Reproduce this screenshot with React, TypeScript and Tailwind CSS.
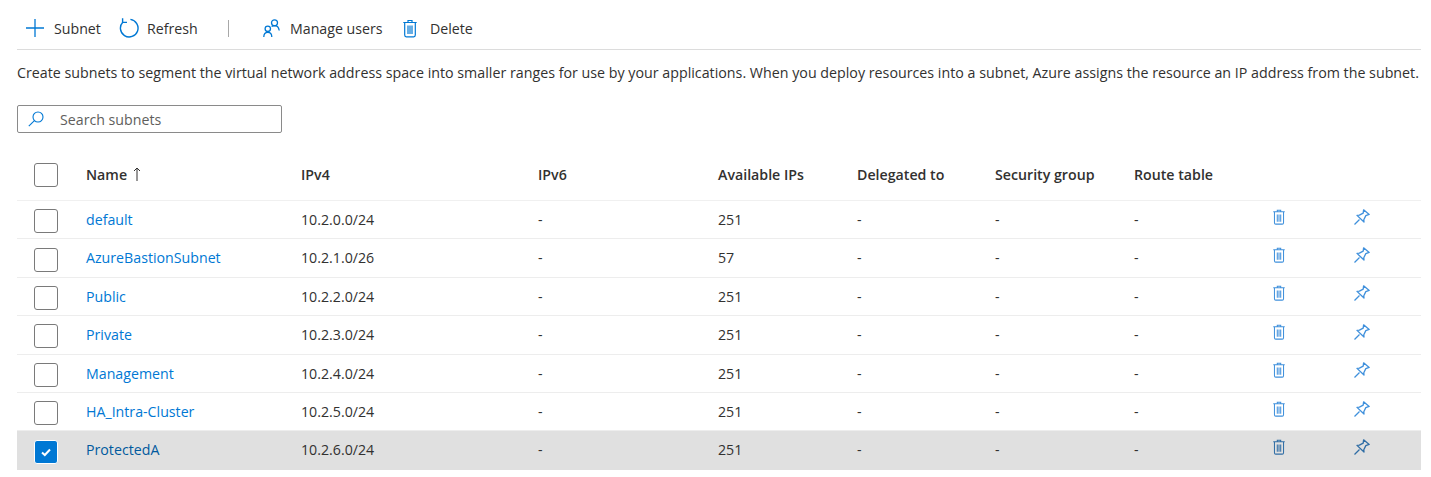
const SUBNETS = [
  { name: "default", ipv4: "10.2.0.0/24", ips: "251" },
  { name: "AzureBastionSubnet", ipv4: "10.2.1.0/26", ips: "57" },
  { name: "Public", ipv4: "10.2.2.0/24", ips: "251" },
  { name: "Private", ipv4: "10.2.3.0/24", ips: "251" },
  { name: "Management", ipv4: "10.2.4.0/24", ips: "251" },
  { name: "HA_Intra-Cluster", ipv4: "10.2.5.0/24", ips: "251" },
  { name: "ProtectedA", ipv4: "10.2.6.0/24", ips: "251", selected: true },
]

const COLS = "grid grid-cols-[69px_215px_237px_180px_139px_138px_139px_139px_81px_47px] items-center"

function PlusIcon({ className }: { className?: string }) {
  return (
    <svg viewBox="0 0 18 18" fill="none" stroke="currentColor" strokeWidth="1.3" className={className}>
      <path d="M9 0v18M0 9h18" />
    </svg>
  )
}

function RefreshIcon({ className }: { className?: string }) {
  return (
    <svg viewBox="0 0 20 20" fill="none" stroke="currentColor" strokeWidth="1.4" className={className}>
      <path d="M11.4 1.4A8.8 8.8 0 1 1 4 3.9" />
      <path d="M3.6 0.2V4.4H8" />
    </svg>
  )
}

function TrashIcon({ className }: { className?: string }) {
  return (
    <svg viewBox="0 0 14 18" fill="none" stroke="currentColor" strokeWidth="1.2" className={className}>
      <path d="M0.3 3h13.4M5 3V1h4V3M1.7 3v12.6c0 .9.6 1.7 1.5 1.7h7.6c.9 0 1.5-.8 1.5-1.7V3" />
      <path d="M5 6v8.4M7 6v8.4M9 6v8.4" />
    </svg>
  )
}

function PinIcon({ className }: { className?: string }) {
  return (
    <svg viewBox="0 0 16 16" fill="none" stroke="currentColor" strokeWidth="1.3" className={className}>
      <path d="M0.5 15.5L5.5 10.5M9.6 0.8L15.2 5.4L11.8 6.6L9.8 10.8L10 13L3 6.4L5.4 6.2L9.2 4.2Z" strokeLinejoin="round" />
    </svg>
  )
}

function UsersIcon({ className }: { className?: string }) {
  return (
    <svg viewBox="0 0 17 18" fill="none" stroke="currentColor" strokeWidth="1.3" className={className}>
      <circle cx="11.5" cy="3.8" r="3" />
      <circle cx="4.8" cy="9.8" r="2.7" />
      <path d="M0.8 18c0-2.8 1.4-4.6 4-4.6s4 1.8 4 4.6M8.6 7.6c.7-.6 1.7-.9 2.9-.9 2.6 0 4.3 1.8 4.7 4.8" />
    </svg>
  )
}

function SearchIcon({ className }: { className?: string }) {
  return (
    <svg viewBox="0 0 16 16" fill="none" stroke="currentColor" strokeWidth="1.1" className={className}>
      <circle cx="10" cy="6" r="5" />
      <path d="M6.4 9.6L0.8 15.2" />
    </svg>
  )
}

function SortArrow() {
  return (
    <svg viewBox="0 0 8 14" fill="none" stroke="currentColor" strokeWidth="1" className="h-[14px] w-2">
      <path d="M4 14V1M1 4l3-3 3 3" />
    </svg>
  )
}

function Checkbox({ checked }: { checked?: boolean }) {
  if (checked) {
    return (
      <div className="flex h-6 w-6 items-center justify-center rounded-[3px] border border-white bg-[#0078d4]">
        <svg viewBox="0 0 12 12" fill="none" stroke="white" strokeWidth="2" className="h-3 w-3">
          <path d="M2 6.5L4.8 9L10 3.5" />
        </svg>
      </div>
    )
  }
  return <div className="h-6 w-6 rounded-[3px] border-[1.5px] border-[#7a7a7a] bg-white" />
}

function ToolButton({ icon, label, className }: { icon: React.ReactNode; label: string; className?: string }) {
  return (
    <div className={`flex items-center ${className ?? ""}`}>
      {icon}
      <span>{label}</span>
    </div>
  )
}

export default function App() {
  return (
    <div className="h-[477px] w-[1431px] overflow-hidden bg-white pl-[17px] pr-[10px] font-['Open_Sans','Noto_Sans',sans-serif] text-[14.2px] text-[#323130]">
      <div className="flex h-[50px] items-center border-b border-[#dcdcdc] pl-[9px] pt-[8px]">
        <ToolButton
          icon={<PlusIcon className="mr-[10px] h-[18px] w-[18px] text-[#0078d4]" />}
          label="Subnet"
          className="w-[93px]"
        />
        <ToolButton
          icon={<RefreshIcon className="mr-[8px] h-5 w-5 text-[#0078d4]" />}
          label="Refresh"
          className="w-[109px]"
        />
        <div className="mr-[34px] h-[17px] w-px bg-[#a8a8a8]" />
        <ToolButton
          icon={<UsersIcon className="mr-[10px] h-[18px] w-[17px] text-[#0078d4]" />}
          label="Manage users"
          className="w-[140px]"
        />
        <ToolButton icon={<TrashIcon className="mr-[13px] h-[19px] w-[14px] text-[#0078d4]" />} label="Delete" />
      </div>

      <p className="mt-[13px] whitespace-nowrap text-[14.25px] leading-5">
        Create subnets to segment the virtual network address space into smaller ranges for use by your applications. When you deploy resources into a subnet, Azure assigns the resource an IP address from the subnet.
      </p>

      <div className="mt-[22px] flex h-7 w-[265px] items-center rounded-[2px] border border-[#8a8a8a] pl-[10px]">
        <SearchIcon className="mr-[16px] h-4 w-4 text-[#0078d4]" />
        <span className="pt-px text-[#605e5c]">Search subnets</span>
      </div>

      <div className={`${COLS} mt-[16px] h-[52px] border-b border-[#f0f0f0] font-semibold`}>
        <div className="pl-[17px]">
          <Checkbox />
        </div>
        <div className="flex items-center gap-[6px]">
          Name <SortArrow />
        </div>
        <div>IPv4</div>
        <div>IPv6</div>
        <div>Available IPs</div>
        <div>Delegated to</div>
        <div>Security group</div>
        <div>Route table</div>
      </div>

      {SUBNETS.map((subnet) => (
        <div
          key={subnet.name}
          className={`${COLS} h-[38.4px] border-b ${subnet.selected ? "border-[#e0e0e0] bg-[#e0e0e0]" : "border-[#ededed]"}`}
        >
          <div className="pl-[17px] pt-[3px]">
            <Checkbox checked={subnet.selected} />
          </div>
          <div className={subnet.selected ? "text-[#005a9e]" : "text-[#0078d4]"}>{subnet.name}</div>
          <div>{subnet.ipv4}</div>
          <div>-</div>
          <div>{subnet.ips}</div>
          <div>-</div>
          <div>-</div>
          <div>-</div>
          <div className={`pb-[6px] ${subnet.selected ? "text-[#2f6da5]" : "text-[#3f90dc]"}`}>
            <TrashIcon className="h-4 w-3" />
          </div>
          <div className={`pb-[6px] ${subnet.selected ? "text-[#2f6da5]" : "text-[#3f90dc]"}`}>
            <PinIcon className="h-4 w-4" />
          </div>
        </div>
      ))}
    </div>
  )
}
